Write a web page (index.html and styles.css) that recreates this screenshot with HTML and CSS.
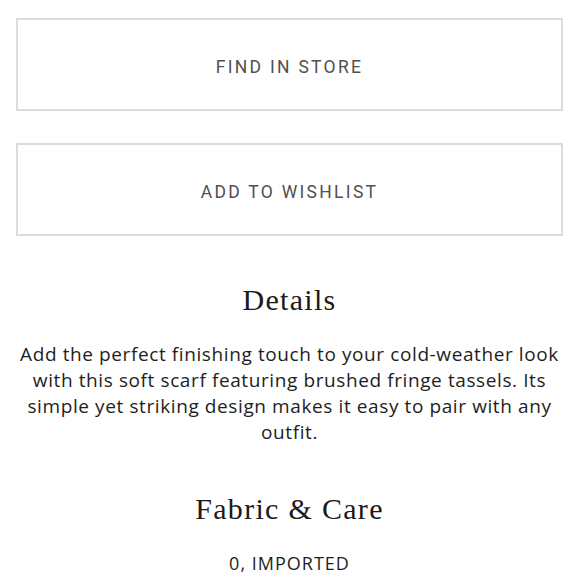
FILE: index.html
```html
<!DOCTYPE html>
<html>
<head>
<meta charset="utf-8">
<link rel="stylesheet" href="styles.css">
</head>
<body>
<div class="page">
  <div class="actions">
    <button class="btn">FIND IN STORE</button>
    <button class="btn">ADD TO WISHLIST</button>
  </div>
  <section class="section">
    <h2 class="title">Details</h2>
    <p class="text">Add the perfect finishing touch to your cold-weather look with this soft scarf featuring brushed fringe tassels. Its simple yet striking design makes it easy to pair with any outfit.</p>
  </section>
  <section class="section">
    <h2 class="title">Fabric &amp; Care</h2>
    <p class="care">0, IMPORTED</p>
  </section>
</div>
</body>
</html>
```

FILE: styles.css
```css
html, body {
  margin: 0;
  padding: 0;
  background: #fff;
}
.page {
  padding: 18px 15px 0 16px;
}
.actions {
  display: flex;
  flex-direction: column;
  gap: 32px;
}
.btn {
  display: flex;
  align-items: center;
  justify-content: center;
  height: 93px;
  width: 100%;
  border: 2px solid #dcdcdc;
  background: #fff;
  font-family: Roboto, "Liberation Sans", sans-serif;
  font-size: 17.5px;
  letter-spacing: 2.3px;
  color: #505050;
  padding: 4px 0 0;
}
.section {
  text-align: center;
}
.title {
  font-family: "Liberation Serif", serif;
  font-weight: normal;
  font-size: 30px;
  letter-spacing: 1.3px;
  color: #1a1a1a;
  margin: 46px 0 23px;
  line-height: 36px;
}
.text {
  font-family: "Open Sans", sans-serif;
  font-size: 19px;
  line-height: 26px;
  letter-spacing: 0.6px;
  color: #1e1e1e;
  margin: 0 -2px;
}
.care {
  font-family: "Open Sans", sans-serif;
  font-size: 18px;
  letter-spacing: 1px;
  color: #1e1e1e;
  margin: 24px 0 0;
}
.section + .section .title {
  margin-bottom: 0;
}
```
